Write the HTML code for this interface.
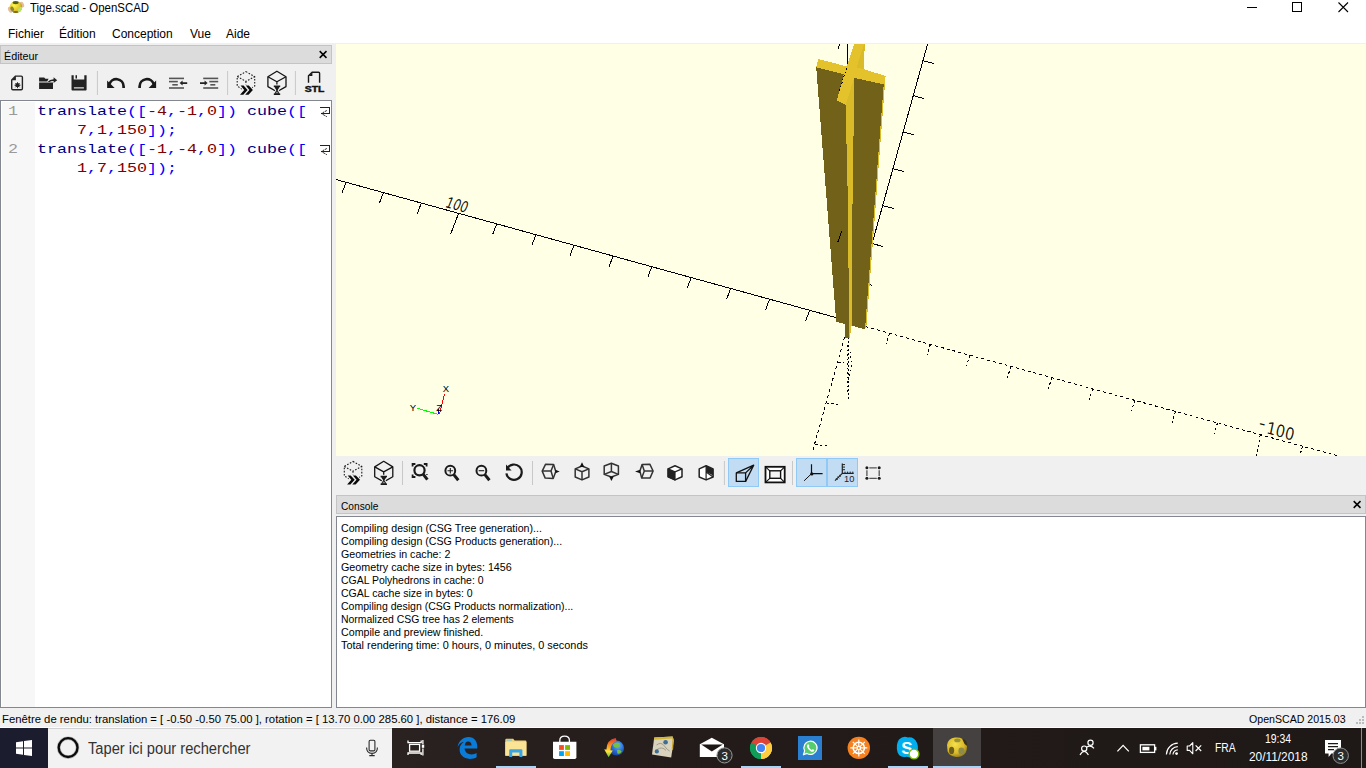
<!DOCTYPE html>
<html lang="fr">
<head>
<meta charset="utf-8">
<title>Tige.scad - OpenSCAD</title>
<style>
*{box-sizing:border-box;margin:0;padding:0}
html,body{width:1366px;height:768px;overflow:hidden;background:#f0f0f0}
body{position:relative;font-family:"Liberation Sans",sans-serif;font-size:12px;color:#000}
.abs{position:absolute}
.t{position:absolute;white-space:pre;line-height:1}
#titlebar{left:0;top:0;width:1366px;height:23px;background:#fff}
#menubar{left:0;top:23px;width:1366px;height:20px;background:#fff}
#docktitle1{left:0;top:45px;width:332px;height:19px;background:#dcdcdc;border:1px solid #c4c4c4}
#editor{left:0;top:100px;width:332px;height:608px;background:#fff;border:1px solid #828790}
#margin{left:2px;top:102px;width:33px;height:605px;background:#f7f7f7}
#viewport{left:336px;top:44px;width:1030px;height:412px;background:#ffffe5}
#vtoolbar{left:336px;top:456px;width:1030px;height:39px;background:#f0f0f0}
#docktitle2{left:336px;top:495px;width:1030px;height:19px;background:#dcdcdc;border:1px solid #c4c4c4}
#console{left:336px;top:516px;width:1030px;height:192px;background:#fff;border:1px solid #828790}
#statusbar{left:0;top:708px;width:1366px;height:20px;background:#f0f0f0}
#taskbar{left:0;top:728px;width:1366px;height:40px;background:#1c1718}
#search{left:48px;top:728px;width:344px;height:40px;background:#f2f2f2}
.code{font-family:"Liberation Mono",monospace;font-size:13px;transform:scaleX(1.2818);transform-origin:0 0}
.kw{color:#00007f}.op{color:#0000ff}.num{color:#7f0000}
.ln{color:#9a9a9a}
.con{font-size:11px}
</style>
</head>
<body>
<div id="titlebar" class="abs"></div>
<div id="menubar" class="abs"></div>
<div class="t" id="title" style="left:30px;top:2px;font-size:12px;transform-origin:0 0;transform:scaleX(0.9532)">Tige.scad - OpenSCAD</div>
<div class="t" style="left:8px;top:28px">Fichier</div>
<div class="t" style="left:59px;top:28px">Édition</div>
<div class="t" style="left:112px;top:28px">Conception</div>
<div class="t" style="left:190px;top:28px">Vue</div>
<div class="t" style="left:226px;top:28px">Aide</div>

<div id="docktitle1" class="abs"></div>
<div class="t con" id="dk1" style="left:4px;top:51px;transform-origin:0 0;transform:scaleX(0.9811)">Éditeur</div>
<div id="editor" class="abs"></div>
<div id="margin" class="abs"></div>


<div class="t code" style="left:36.6px;top:105px"><span class="kw">translate</span><span class="op">([-</span><span class="num">4</span><span class="op">,-</span><span class="num">1</span><span class="op">,</span><span class="num">0</span><span class="op">])</span> <span class="kw">cube</span><span class="op">([</span></div>
<div class="t code" style="left:76.6px;top:124px"><span class="num">7</span><span class="op">,</span><span class="num">1</span><span class="op">,</span><span class="num">150</span><span class="op">]);</span></div>
<div class="t code" style="left:36.6px;top:143px"><span class="kw">translate</span><span class="op">([-</span><span class="num">1</span><span class="op">,-</span><span class="num">4</span><span class="op">,</span><span class="num">0</span><span class="op">])</span> <span class="kw">cube</span><span class="op">([</span></div>
<div class="t code" style="left:76.6px;top:162px"><span class="num">1</span><span class="op">,</span><span class="num">7</span><span class="op">,</span><span class="num">150</span><span class="op">]);</span></div>
<div class="t code ln" style="left:8.4px;top:105px">1</div>
<div class="t code ln" style="left:8.4px;top:143px">2</div>

<!--ED_TOOLBAR-->
<svg class="abs" style="left:0;top:64px" width="332" height="36" viewBox="0 64 332 36">
<g fill="none" stroke="#222" stroke-width="1.4" stroke-linejoin="round"><path d="M15.6 76.1 H21.2 Q22.4 76.1 22.4 77.3 V88.5 Q22.4 89.7 21.2 89.7 H12.9 Q11.7 89.7 11.7 88.5 V80 Z"/></g>
<path d="M15.9 76.3 V80.3 H11.9 Z" fill="#222"/>
<circle cx="17.5" cy="85.2" r="2.1" fill="#222"/><g stroke="#222" stroke-width="0.9"><path d="M17.5 82.2 V88.2 M14.5 85.2 H20.5 M15.4 83.1 L19.6 87.3 M19.6 83.1 L15.4 87.3"/></g>
<path d="M39.1 77.4 H44.2 L45.4 78.8 H48.6 L47.2 81.6 H39.1 Z" fill="#222"/>
<rect x="39.1" y="82.5" width="13.9" height="6.5" fill="#222"/>
<path d="M47.6 81.9 Q49.5 79.3 53.6 79.2 V77.3 L57.2 80.2 L53.6 83 V81.1 Q51 81 49.6 81.9 Z" fill="#222"/>
<path d="M71.5 75.2 H73.7 V79.5 H84.3 V75.2 H86.6 V89.4 Q86.6 90.4 85.6 90.4 H72.5 Q71.5 90.4 71.5 89.4 Z" fill="#222"/>
<rect x="75.5" y="75.2" width="1.5" height="3.3" fill="#222"/>
<rect x="73.9" y="87.1" width="10" height="1.5" fill="#bdbdbd"/>
<rect x="96.9" y="71" width="1" height="24.0" fill="#c8c8c8"/>
<path d="M123.6 88.1 V86.4 A7.3 7.3 0 0 0 109.3 84.4" fill="none" stroke="#1a1a1a" stroke-width="2.7"/><path d="M107.1 80.6 V88.1 H114.6 Z" fill="#1a1a1a"/>
<g transform="translate(263.2 0) scale(-1 1)"><path d="M123.6 88.1 V86.4 A7.3 7.3 0 0 0 109.3 84.4" fill="none" stroke="#1a1a1a" stroke-width="2.7"/><path d="M107.1 80.6 V88.1 H114.6 Z" fill="#1a1a1a"/></g>
<g fill="#555"><rect x="169" y="77.6" width="15" height="1.6"/><rect x="169" y="80.8" width="8.8" height="1.6"/><rect x="172.3" y="84" width="5.5" height="1.6"/><rect x="169" y="87.2" width="15" height="1.6"/></g>
<path d="M187.2 82.3 H182.6 V80.6 L179.6 83.1 L182.6 85.6 V83.9 H187.2 Z" fill="#222"/>
<g fill="#555"><rect x="203.2" y="77.6" width="15" height="1.6"/><rect x="209.3" y="80.8" width="8.9" height="1.6"/><rect x="210.3" y="84" width="5" height="1.6"/><rect x="203.2" y="87.2" width="15" height="1.6"/></g>
<path d="M200 82.3 H204.6 V80.6 L207.6 83.1 L204.6 85.6 V83.9 H200 Z" fill="#222"/>
<rect x="227.1" y="71" width="1" height="24.0" fill="#c8c8c8"/>
<g fill="none" stroke="#1a1a1a" stroke-width="1.1" stroke-dasharray="1.6 1.5"><path d="M245.9,71.6 L254.7,76.6 L254.7,86.1 L245.9,91.2 L237.2,86.1 L237.2,76.6 Z"/><path d="M237.2,76.6 L245.9,81.4 L254.7,76.6 M245.9,81.4 L245.9,91.0"/></g><path d="M240.6,85.6 L243.6,85.6 L247.6,90.0 L243.3,94.7 L240.0,94.7 L244.2,90.0 Z M245.8,85.6 L248.8,85.6 L252.9,90.0 L248.5,94.7 L245.2,94.7 L249.4,90.0 Z" fill="#f0f0f0" stroke="#f0f0f0" stroke-width="2.2" stroke-linejoin="round"/><path d="M240.6,85.6 L243.6,85.6 L247.6,90.0 L243.3,94.7 L240.0,94.7 L244.2,90.0 Z M245.8,85.6 L248.8,85.6 L252.9,90.0 L248.5,94.7 L245.2,94.7 L249.4,90.0 Z" fill="#0a0a0a"/>
<g fill="none" stroke="#141414" stroke-width="1.3" stroke-linejoin="round"><path d="M276.9,71.2 L286.0,76.8 L286.0,86.6 L276.9,91.8 L267.9,86.6 L267.9,76.8 Z"/><path d="M267.9,76.8 L276.9,81.8 L286.0,76.8 M276.9,81.8 L276.9,86.0"/></g><path d="M273.8,85.6 H280.2 V87.1 H279.6 L277.6,90.2 L279.6,93.4 H280.2 V94.9 H273.8 V93.4 H274.4 L276.4,90.2 L274.4,87.1 H273.8 Z" fill="#f0f0f0" stroke="#f0f0f0" stroke-width="2"/><path d="M273.8,85.6 H280.2 V87.1 H279.6 L277.6,90.2 L279.6,93.4 H280.2 V94.9 H273.8 V93.4 H274.4 L276.4,90.2 L274.4,87.1 H273.8 Z" fill="#1a1a1a"/><path d="M275.6,88.2 H278.4 L277.0,90.0 Z" fill="#1a1a1a"/><path d="M275.3,93.2 L277.0,91.2 L278.7,93.2 Z" fill="#8a8a8a"/>
<rect x="294.9" y="71" width="1" height="24.0" fill="#c8c8c8"/>
<path d="M308.5 82.8 V75.8 L312.2 72.2 H318.6 Q319.6 72.2 319.6 73.2 V82.8" fill="none" stroke="#1a1a1a" stroke-width="1.4"/><path d="M312.4 72.4 V76 H308.7 Z" fill="#1a1a1a"/>
<text x="314.6" y="92.2" text-anchor="middle" font-family="Liberation Sans, sans-serif" font-weight="bold" font-size="9.4px" fill="#111" stroke="#111" stroke-width="0.45" textLength="19.6" lengthAdjust="spacingAndGlyphs">STL</text>
</svg>
<!--/ED_TOOLBAR-->
<div id="viewport" class="abs"></div>
<!--SCENE-->
<svg class="abs" style="left:336px;top:44px" width="1030" height="412" viewBox="336 44 1030 412" shape-rendering="crispEdges">
<g stroke="#000" stroke-width="1" fill="none">
<path d="M336 179.5 L848.5 321.0"/>
<path d="M346.1 182.3 l-4 10.5 M383.4 192.6 l-4 10.5 M421.3 203.1 l-4 10.5 M496.7 223.9 l-4 10.5 M535.9 234.7 l-4 10.5 M574.0 245.2 l-4 10.5 M613.1 256.0 l-4 10.5 M651.8 266.7 l-4 10.5 M691.2 277.6 l-4 10.5 M730.7 288.5 l-4 10.5 M769.6 299.2 l-4 10.5 M809.7 310.3 l-4 10.5 M458.6 213.4 l-8 20.8 "/>
<path d="M927.6 44 L856.4 300"/>
<path d="M923.6 61.1 L933.75 63.4 M913.4 95.5 L923.6 98.6 M903.3 132.2 L913.9 134.6 M893.1 168.75 L903.75 171.4 M882.5 205.5 L893.9 208.6 M872 243.4 L883 246.6 M861.5 282 L872 285.3 "/>
<path d="M847.5 44 V67 M839.7 44 L838.2 48.7"/>
</g>
<g stroke="#000" stroke-width="1" fill="none" stroke-dasharray="3 3">
<path d="M865.6 326.7 L1366 463.6"/>
<path d="M889.6 333.3 l-3.6 11 M930.4 344.4 l-3.6 11 M970.0 355.3 l-3.6 11 M1011.0 366.5 l-3.6 11 M1051.9 377.7 l-3.6 11 M1092.6 388.8 l-3.6 11 M1134.9 400.4 l-3.6 11 M1175.6 411.5 l-3.6 11 M1217.5 423.0 l-3.6 11 M1302.7 446.3 l-3.6 11 M1345.0 457.9 l-3.6 11 M1260.2 434.7 l-3.8 22 " stroke-dasharray="2.5 2.5"/>
<path d="M844.6 337.3 L812 453.2"/>
<path d="M838.3 362.3 L843.7 362.8 M826.4 402.9 L837.7 404.2 M814.6 444.2 L827 446" stroke-dasharray="3 2"/>
<path d="M848.6 337.3 V399" stroke-dasharray="2 2"/>
<path d="M847 345 V395 M850 352 L851.5 366 L848 380" stroke-dasharray="1.5 3"/>
</g>
<g>
<path d="M816.2 67.3 L843.7 74.2 L848 104 L850.5 318 L848.9 324 L845.25 324 L836.2 321.7 Z" fill="#726118"/>
<path d="M836.8 100.6 L845.7 104.9 L850 200 L850 318 L848.9 337.6 L845.3 337.6 L844.8 322 Z" fill="#726118"/>
<path d="M852.5 75.8 L884.3 82.5 L884.3 84.6 L865 329.3 L852.3 325.8 L851.6 318 Z" fill="#726118"/>
<path d="M883.7 84.4 L884 78 L885.6 76 L866.4 326.6 L865 329.3 Z" fill="#d9ba28"/>
<path d="M854.2 77.8 L845.7 104.9 L846.2 130 L847.9 202 L848.9 310 L848.9 337.6 L849.7 337.6 L852.4 321 L852.5 205 L853.6 130 Z" fill="#d9ba28"/>
<path d="M856.5 67.3 L864 44 L864.8 44 L863.8 69.2 Z" fill="#d9ba28"/>
<path d="M818.2 59.1 L846.9 66.4 L854.2 44 L864.1 44 L856.6 67.4 L863.75 69.2 L885.6 76 L884.9 84.6 L854.2 77.8 L845.7 104.9 L836.8 100.65 L843.7 74.2 L816.2 67.3 Z" fill="#e3c22b"/>
</g>
<g stroke="#000" stroke-width="1" fill="none"><path d="M846.4 68.2 L839.2 92" stroke-dasharray="1.5 2.2"/><path d="M841.6 231 L837.7 242.5"/></g>
<g shape-rendering="auto" font-family="Liberation Sans, sans-serif" fill="#000">
<text transform="matrix(0.961 0.276 -0.38 0.925 444.6 206.4)" font-family="DejaVu Sans, Liberation Sans, sans-serif" font-weight="200" stroke="#000" stroke-width="0.45" font-size="14.5px" textLength="22" lengthAdjust="spacingAndGlyphs">100</text>
<text transform="matrix(0.963 0.27 -0.208 0.975 1258 430.6)" font-family="DejaVu Sans, Liberation Sans, sans-serif" font-weight="200" stroke="#000" stroke-width="0.45" font-size="16px"><tspan dy="-3">-</tspan><tspan dy="3" dx="2.2" textLength="28.5" lengthAdjust="spacingAndGlyphs">100</tspan></text>
</g>
<g stroke-width="1" fill="none"><path d="M444.6 394.2 L439.3 414.4" stroke="#f00"/><path d="M417.1 408.3 L438.3 414.4" stroke="#0f0"/><path d="M438.5 409.2 V414.4" stroke="#00f"/></g>
<g shape-rendering="auto" font-family="Liberation Sans, sans-serif" font-size="9.5px" fill="#000" text-anchor="middle"><text x="446" y="392.3">X</text><text x="413" y="411.3">Y</text><text x="439.2" y="411.2">Z</text></g>
</svg>
<!--/SCENE-->
<div id="vtoolbar" class="abs"></div>
<!--VT_TOOLBAR-->
<svg class="abs" style="left:336px;top:456px" width="1030" height="39" viewBox="336 456 1030 39">
<rect x="728.5" y="458.5" width="30" height="28" fill="#c2dcf3" stroke="#90c8f6" stroke-width="1"/>
<rect x="796.5" y="458.5" width="30" height="28" fill="#c2dcf3" stroke="#90c8f6" stroke-width="1"/>
<rect x="827.5" y="458.5" width="30" height="28" fill="#c2dcf3" stroke="#90c8f6" stroke-width="1"/>
<g fill="none" stroke="#1a1a1a" stroke-width="1.1" stroke-dasharray="1.6 1.5"><path d="M353.0,461.4 L361.8,466.4 L361.8,475.9 L353.0,481.0 L344.3,475.9 L344.3,466.4 Z"/><path d="M344.3,466.4 L353.0,471.2 L361.8,466.4 M353.0,471.2 L353.0,480.8"/></g><path d="M347.7,475.4 L350.7,475.4 L354.7,479.8 L350.4,484.5 L347.1,484.5 L351.3,479.8 Z M352.9,475.4 L355.9,475.4 L360.0,479.8 L355.6,484.5 L352.3,484.5 L356.5,479.8 Z" fill="#f0f0f0" stroke="#f0f0f0" stroke-width="2.2" stroke-linejoin="round"/><path d="M347.7,475.4 L350.7,475.4 L354.7,479.8 L350.4,484.5 L347.1,484.5 L351.3,479.8 Z M352.9,475.4 L355.9,475.4 L360.0,479.8 L355.6,484.5 L352.3,484.5 L356.5,479.8 Z" fill="#0a0a0a"/>
<g fill="none" stroke="#141414" stroke-width="1.3" stroke-linejoin="round"><path d="M383.7,461.3 L392.8,466.9 L392.8,476.7 L383.7,481.9 L374.7,476.7 L374.7,466.9 Z"/><path d="M374.7,466.9 L383.7,471.9 L392.8,466.9 M383.7,471.9 L383.7,476.1"/></g><path d="M380.6,475.7 H387.0 V477.2 H386.4 L384.4,480.3 L386.4,483.5 H387.0 V485.0 H380.6 V483.5 H381.2 L383.2,480.3 L381.2,477.2 H380.6 Z" fill="#f0f0f0" stroke="#f0f0f0" stroke-width="2"/><path d="M380.6,475.7 H387.0 V477.2 H386.4 L384.4,480.3 L386.4,483.5 H387.0 V485.0 H380.6 V483.5 H381.2 L383.2,480.3 L381.2,477.2 H380.6 Z" fill="#1a1a1a"/><path d="M382.4,478.3 H385.2 L383.8,480.1 Z" fill="#1a1a1a"/><path d="M382.1,483.3 L383.8,481.3 L385.5,483.3 Z" fill="#8a8a8a"/>
<rect x="402.0" y="461" width="1" height="24.0" fill="#c8c8c8"/>
<g fill="none" stroke="#1a1a1a"><circle cx="419.5" cy="470.3" r="5.1" stroke-width="2.2"/><path d="M423.3 474.4 L427.4 479.6" stroke-width="3"/><path d="M412.6 466.6 V464 H415.4 M423.8 464 H426.6 V466.6 M412.6 474.4 V477 H415.4 M426.9 474.2 V475" stroke-width="1.8"/></g>
<g fill="none" stroke="#1a1a1a"><circle cx="450.3" cy="470.7" r="4.9" stroke-width="2"/><path d="M453.8 474.6 L458.3 480.2" stroke-width="3"/><path d="M447.5 470.7 H453.1 M450.3 467.9 V473.5" stroke-width="1.1"/></g>
<g fill="none" stroke="#1a1a1a"><circle cx="481.4" cy="470.7" r="4.9" stroke-width="2"/><path d="M484.9 474.6 L489.4 480.2" stroke-width="3"/><path d="M478.59999999999997 470.7 H484.2" stroke-width="1.1"/></g>
<path d="M507.2 468.6 A7.7 7.7 0 1 1 506.4 473.4" fill="none" stroke="#1a1a1a" stroke-width="2.2"/><path d="M506 464.6 V470.4 H511.6 Z" fill="#1a1a1a"/>
<rect x="532.0" y="461" width="1" height="24.0" fill="#c8c8c8"/>
<g fill="none" stroke="#333" stroke-width="1.5" stroke-linejoin="round"><path d="M542.2 471.1 L545.5 464.3 L553.6 464.5 L555.8 471.4 L553.2 478.4 L545.2 478.1 Z"/><path d="M542.2 471.1 L551 471 M553.6 464.5 L551 471 L553.2 478.4"/></g><path d="M555.4 469.7 V473.3 L559.7 471.5 Z" fill="#111"/>
<g fill="none" stroke="#333" stroke-width="1.5" stroke-linejoin="round"><path d="M582 466 L588.9 468.9 V477 L582 479.9 L575.2 477 V468.9 Z"/><path d="M575.2 468.9 L582 471.7 L588.9 468.9 M582 471.7 V479.9"/></g><path d="M582 462.2 L579.7 466.9 H584.3 Z" fill="#111"/>
<g fill="none" stroke="#333" stroke-width="1.5" stroke-linejoin="round"><path d="M611.4 463.3 L618.4 466 V474.4 L611.4 477 L604.2 474.4 V466 Z"/><path d="M611.4 463.3 V471.5 L604.2 474.4 M611.4 471.5 L618.4 474.4"/></g><path d="M611.4 481.1 L609.2 476.5 H613.7 Z" fill="#111"/>
<g fill="none" stroke="#333" stroke-width="1.5" stroke-linejoin="round"><path d="M639.9 471.1 L642.1 464.4 L649.8 464.2 L653.1 471 L650.1 477.9 L641.7 478.1 Z"/><path d="M653.1 471 L644.3 471.1 M642.1 464.4 L644.3 471.1 L641.7 478.1"/></g><path d="M640.2 469.7 V473.3 L635 471.5 Z" fill="#111"/>
<path d="M675 465.8 L682 468.9 V476.7 L675 479.9 L668.1 476.7 V468.9 Z" fill="#fff" stroke="#222" stroke-width="1.5" stroke-linejoin="round"/><path d="M668.1 468.9 L675 471.9 V479.9 L668.1 476.7 Z" fill="#222" stroke="#222" stroke-width="1.2" stroke-linejoin="round"/><path d="M675 471.9 L682 468.9" stroke="#222" stroke-width="1.2"/>
<path d="M706.1 465.8 L713.1 468.9 V477 L706.1 479.9 L699.2 477 V468.9 Z" fill="#fff" stroke="#222" stroke-width="1.5" stroke-linejoin="round"/><path d="M706.1 465.8 L713.1 468.9 V475.4 L706.1 472 Z" fill="#222"/><path d="M706.1 465.8 V479.9 M706.1 472 L713.1 477" stroke="#222" stroke-width="1.2"/><path d="M699.2 468.9 L703 467.2 V470.6 Z" fill="#222" opacity="0"/>
<rect x="723.9" y="461" width="1" height="24.0" fill="#c8c8c8"/>
<g fill="none" stroke="#111" stroke-width="1.3" stroke-linejoin="round"><rect x="736.3" y="472.9" width="9.3" height="8.5"/><path d="M736.3 472.9 L753.7 465.2 L745.6 472.9 M753.7 465.2 L745.6 481.4"/></g>
<rect x="765.5" y="466.8" width="19.2" height="15.6" fill="#fff" stroke="#111" stroke-width="1.8"/><rect x="769.8" y="470.8" width="10.8" height="7.5" fill="#f4f4f4" stroke="#111" stroke-width="1.4"/><path d="M765.5 466.8 L769.8 470.8 M784.7 466.8 L780.6 470.8 M765.5 482.4 L769.8 478.3 M784.7 482.4 L780.6 478.3" stroke="#111" stroke-width="1.1"/>
<rect x="792.0" y="461" width="1" height="24.0" fill="#c8c8c8"/>
<g stroke="#111" stroke-width="1.2" fill="none"><path d="M811.5 464.2 V473.7 H822.6"/><path d="M811.5 473.7 L804.1 480.8" stroke-width="1"/></g><circle cx="811.8" cy="473.9" r="1.6" fill="#111"/>
<g stroke="#222" stroke-width="1.2" fill="none"><path d="M842.3 463.4 V473.3 H853.7 M842.3 473.3 L835 480.6"/><path d="M842.3 464.6 H845 M842.3 467.1 H845 M842.3 469.7 H845 M845 473.3 V471.6 M847.6 473.3 V471.6 M850.2 473.3 V471.6 M852.8 473.3 V471.6" stroke-width="1"/><path d="M839.2 475 L840.9 476.7 M837.6 476.6 L839.3 478.3 M836 478.2 L837.7 479.9" stroke-width="0.9"/></g>
<text x="844" y="482.2" font-family="Liberation Sans, sans-serif" font-size="9.3px" fill="#222">10</text>
<g stroke="#555" stroke-width="1.3"><path d="M869.3 467.8 H876.8 M869.3 478.3 H876.8 M866.9 470.2 V475.9 M879.2 470.2 V475.9"/></g><g fill="#1a1a1a"><circle cx="866.9" cy="467.8" r="1.5"/><circle cx="879.2" cy="467.8" r="1.5"/><circle cx="866.9" cy="478.3" r="1.5"/><circle cx="879.2" cy="478.3" r="1.5"/></g>
</svg>
<!--/VT_TOOLBAR-->
<div id="docktitle2" class="abs"></div>
<div class="t con" id="dk2" style="left:341px;top:501px;transform-origin:0 0;transform:scaleX(0.9242)">Console</div>
<div id="console" class="abs"></div>
<div id="statusbar" class="abs"></div>
<div class="abs" style="left:0;top:727px;width:1366px;height:1px;background:#fcfcfc"></div>
<div class="t con" id="c0" style="left:341px;top:523px;transform-origin:0 0;transform:scaleX(0.9664)">Compiling design (CSG Tree generation)...</div>
<div class="t con" id="c1" style="left:341px;top:536px;transform-origin:0 0;transform:scaleX(0.9643)">Compiling design (CSG Products generation)...</div>
<div class="t con" id="c2" style="left:341px;top:549px;transform-origin:0 0;transform:scaleX(0.9662)">Geometries in cache: 2</div>
<div class="t con" id="c3" style="left:341px;top:562px;transform-origin:0 0;transform:scaleX(0.9767)">Geometry cache size in bytes: 1456</div>
<div class="t con" id="c4" style="left:341px;top:575px;transform-origin:0 0;transform:scaleX(0.9499)">CGAL Polyhedrons in cache: 0</div>
<div class="t con" id="c5" style="left:341px;top:588px;transform-origin:0 0;transform:scaleX(0.9559)">CGAL cache size in bytes: 0</div>
<div class="t con" id="c6" style="left:341px;top:601px;transform-origin:0 0;transform:scaleX(0.9571)">Compiling design (CSG Products normalization)...</div>
<div class="t con" id="c7" style="left:341px;top:614px;transform-origin:0 0;transform:scaleX(0.9485)">Normalized CSG tree has 2 elements</div>
<div class="t con" id="c8" style="left:341px;top:627px;transform-origin:0 0;transform:scaleX(0.9690)">Compile and preview finished.</div>
<div class="t con" id="c9" style="left:341px;top:640px;transform-origin:0 0;transform:scaleX(0.9897)">Total rendering time: 0 hours, 0 minutes, 0 seconds</div>
<div class="t con" id="st1" style="left:2px;top:714px;transform-origin:0 0;transform:scaleX(1.0280)">Fenêtre de rendu: translation = [ -0.50 -0.50 75.00 ], rotation = [ 13.70 0.00 285.60 ], distance = 176.09</div>
<div class="t con" id="st2" style="left:1249.4px;top:714px;transform-origin:0 0;transform:scaleX(0.9631)">OpenSCAD 2015.03</div>

<!--MISC-->
<svg class="abs" style="left:0;top:0" width="1366" height="23" viewBox="0 0 1366 23">
<defs><radialGradient id="ti" cx="0.35" cy="0.35" r="0.8"><stop offset="0" stop-color="#fff84a"/><stop offset="0.55" stop-color="#e6c62e"/><stop offset="1" stop-color="#8a7a1a"/></radialGradient></defs>
<ellipse cx="10.4" cy="9.6" rx="2.2" ry="3.2" fill="#d8a878" opacity="0.75" transform="rotate(-25 10.4 9.6)"/><ellipse cx="22" cy="4.6" rx="1.9" ry="3" fill="#d8a878" opacity="0.75" transform="rotate(-25 22 4.6)"/>
<ellipse cx="16" cy="7" rx="6.2" ry="5.9" fill="url(#ti)"/>
<ellipse cx="15.6" cy="2.6" rx="3" ry="1.7" fill="#4f5f1c"/><ellipse cx="19.8" cy="9.4" rx="1.7" ry="3" fill="#b9e264" transform="rotate(35 19.8 9.4)"/><ellipse cx="12.2" cy="8.8" rx="1.7" ry="2.4" fill="#8d8434" transform="rotate(-30 12.2 8.8)"/><ellipse cx="15.6" cy="12" rx="2.6" ry="1" fill="#7a6d14"/>
<g stroke="#000" stroke-width="1" fill="none" shape-rendering="crispEdges"><path d="M1247 7.5 H1257"/><rect x="1292.5" y="2.5" width="9" height="9"/></g><path d="M1338.5 2.5 L1348 12 M1348 2.5 L1338.5 12" stroke="#000" stroke-width="1.1" fill="none"/>
</svg>
<svg class="abs" style="left:0;top:44px" width="1366" height="684" viewBox="0 44 1366 684">
<path d="M319.70000000000005 51.1 L326.5 57.9 M326.5 51.1 L319.70000000000005 57.9" stroke="#000" stroke-width="1.5" fill="none"/>
<path d="M1353.6999999999998 501.1 L1360.5 507.9 M1360.5 501.1 L1353.6999999999998 507.9" stroke="#000" stroke-width="1.5" fill="none"/>
<g stroke="#222" stroke-width="1" fill="none"><path d="M320 107.5 H329.5 V113.5 H321.3" shape-rendering="crispEdges"/><path d="M326.8 110.5 L321.3 113.5 L326.8 116.7" stroke-dasharray="2 0.8"/></g>
<g stroke="#222" stroke-width="1" fill="none"><path d="M320 145.5 H329.5 V151.5 H321.3" shape-rendering="crispEdges"/><path d="M326.8 148.5 L321.3 151.5 L326.8 154.7" stroke-dasharray="2 0.8"/></g>
<rect x="1362" y="716" width="2" height="2" fill="#bcbcbc"/><rect x="1359" y="719" width="2" height="2" fill="#bcbcbc"/><rect x="1362" y="719" width="2" height="2" fill="#bcbcbc"/><rect x="1356" y="722" width="2" height="2" fill="#bcbcbc"/><rect x="1359" y="722" width="2" height="2" fill="#bcbcbc"/><rect x="1362" y="722" width="2" height="2" fill="#bcbcbc"/>
</svg>
<!--/MISC-->
<!--TASKBAR-->
<svg class="abs" style="left:0;top:728px" width="1366" height="40" viewBox="0 728 1366 40">
<defs><linearGradient id="tbg" x1="0" x2="1" y1="0" y2="0"><stop offset="0" stop-color="#2a2220"/><stop offset="0.35" stop-color="#221b19"/><stop offset="1" stop-color="#1e1817"/></linearGradient></defs>
<rect x="392" y="728" width="974" height="40" fill="url(#tbg)"/>
<rect x="0" y="728" width="48" height="40" fill="#1c1c2f"/>
<rect x="48" y="728" width="344" height="40" fill="#f2f2f2"/><rect x="48" y="728" width="344" height="1" fill="#d2d2d2"/>
<path d="M16 742.2 L23 741.2 V747.4 H16 Z M24 741.1 L32 740 V747.4 H24 Z M16 748.4 H23 V754.7 L16 753.7 Z M24 748.4 H32 V756 L24 754.9 Z" fill="#fff"/>
<circle cx="68.1" cy="747.6" r="9.4" fill="none" stroke="#000" stroke-opacity="0.25" stroke-width="3.6"/><circle cx="68.1" cy="747.6" r="9.4" fill="none" stroke="#0a0a0a" stroke-width="2.3"/>
<g fill="none" stroke="#2a2a2a" stroke-width="1.1"><rect x="369.1" y="740.3" width="5.8" height="10.6" rx="1.2"/><path d="M366.6 747.5 Q366.6 753.4 372 753.4 Q377.4 753.4 377.4 747.5 M372 753.4 V755.5 M369.3 755.6 H374.7"/></g>
<g fill="none" stroke="#fff" stroke-width="1.3"><rect x="409.6" y="744.4" width="10" height="6.8"/><path d="M408 740.6 V742.6 H421.2 V740.6 M408 755 V753 H421.2 V755 M422.9 740 V744 M422.9 748.5 V755.5"/></g><rect x="421.8" y="744.6" width="2.4" height="3.2" fill="#fff"/>
<path d="M457.6 747.2 C458.6 740.8 463.4 737.1 468.4 737.1 C474.6 737.1 477.2 741.8 477.2 746.4 V748.6 H464.6 C464.8 752.6 468 754.4 471.4 754.4 C473.6 754.4 475.4 753.8 476.6 753 V757.2 C475 758.2 472.6 758.9 469.8 758.9 C463.4 758.9 459.6 754.8 459.6 749.6 C459.6 746.2 461.4 743.4 464 741.8 C460.6 742.6 458.6 744.8 457.6 747.2 Z M464.8 745.4 H471.6 C471.6 743 470.2 741.6 468.2 741.6 C466.2 741.6 465 743.2 464.8 745.4 Z" fill="#0a7bd7"/>
<rect x="496" y="766" width="40" height="2" fill="#a5d4f7"/>
<path d="M505.3 740 Q505.3 738.8 506.5 738.8 H513.2 L514.6 740.4 H525.2 Q526.4 740.4 526.4 741.6 V755.6 H505.3 Z" fill="#f5d273"/><path d="M505.3 741.8 H526.4 V755.8 H505.3 Z" fill="#fbe395"/><rect x="506.5" y="739.6" width="5.6" height="1" fill="#6fc3ee"/>
<path d="M509.2 757 V750.2 Q509.2 749.2 510.2 749.2 H521.4 Q522.4 749.2 522.4 750.2 V757 H519.4 V752.4 H512.2 V757 Z" fill="#38a5e6"/>
<path d="M559.8 742 V740.6 Q559.8 736.2 564.6 736.2 Q569.4 736.2 569.4 740.6 V742" fill="none" stroke="#fff" stroke-width="1.3"/><path d="M553 741.8 H576.4 V757.2 Q576.4 758.9 574.7 758.9 H554.7 Q553 758.9 553 757.2 Z" fill="#fff"/>
<rect x="559.1" y="745.1" width="4.8" height="4.8" fill="#f25022"/><rect x="565.1" y="745.1" width="4.9" height="4.8" fill="#7fba00"/><rect x="559.1" y="751.2" width="4.8" height="4.8" fill="#00a4ef"/><rect x="565.1" y="751.2" width="4.9" height="4.8" fill="#ffb900"/>
<defs><radialGradient id="gl" cx="0.6" cy="0.35" r="0.7"><stop offset="0" stop-color="#6fb6ff"/><stop offset="0.5" stop-color="#2a6fd6"/><stop offset="1" stop-color="#153f96"/></radialGradient><linearGradient id="rb" x1="0" x2="0" y1="0" y2="1"><stop offset="0" stop-color="#e6332a"/><stop offset="0.4" stop-color="#f7941d"/><stop offset="0.7" stop-color="#ffe23a"/><stop offset="1" stop-color="#5cc13b"/></linearGradient></defs>
<circle cx="616.4" cy="748" r="7.6" fill="url(#gl)"/><path d="M613 744.2 Q616 741.6 619.4 743 Q620.6 745.4 618.4 747 Q615.4 748.2 613.6 746.6 Z M617 750 Q620.4 749 621.6 751.6 Q620 754.6 617.4 753.6 Z" fill="#74c043"/>
<path d="M615.8 738 Q606.6 739.6 606.4 749.6 L604.2 749.2 L608.6 757.2 L612.8 750.6 L610.4 750.2 Q610.4 743.6 616.6 741.2 Z" fill="url(#rb)"/>
<path d="M654.2 737.6 L672.6 736.6 L673.8 740.2 L671.2 757.6 L652 754.4 Z" fill="#d9d2bd"/><path d="M654.2 737.6 L672.6 736.6 L673.2 738.6 L654 739.8 Z" fill="#d4b635"/><path d="M672.6 736.6 L673.9 740.2 L673 750 L671.8 749.6 Z" fill="#c9a92d"/>
<path d="M656.6 745 Q661 741.4 664.4 746 T669.6 751 M657 749.6 Q662 746 666 750.4" fill="none" stroke="#a09a8a" stroke-width="1"/><circle cx="665.6" cy="742.2" r="2.3" fill="#3c6e96"/><circle cx="656.8" cy="751.4" r="2.1" fill="#3c6e96"/>
<path d="M699.8 744.2 L711.8 737.8 L724 744.2 V757 H699.8 Z" fill="#fff"/><path d="M701.2 744.6 H722.8 L711.8 751.4 Z" fill="#1d1716"/>
<circle cx="724.5" cy="755.4" r="7.6" fill="#2b2b2b" stroke="#9a9a9a" stroke-width="1"/>
<text x="724.6" y="759.6" text-anchor="middle" font-family="Liberation Sans, sans-serif" font-size="11.5px" fill="#fff">3</text>
<rect x="741" y="766" width="40" height="2" fill="#a5d4f7"/>
<circle cx="761" cy="748" r="11" fill="#0f9d58"/><path d="M761 748 L751.5 742.5 A11 11 0 0 1 770.5 742.5 Z" fill="#db4437"/><path d="M761 748 L770.5 742.5 A11 11 0 0 1 761 759 Z" fill="#ffcd40"/>
<path d="M761 737 A11 11 0 0 1 770.53 742.5 L761 742.5 Z" fill="#db4437"/><path d="M770.53 742.5 A11 11 0 0 1 761 759 L765.8 750.8 Z" fill="#ffcd40"/><path d="M761 759 A11 11 0 0 1 751.47 742.5 L756.2 750.8 Z" fill="#0f9d58"/>
<circle cx="761" cy="748" r="5.2" fill="#fff"/><circle cx="761" cy="748" r="4.1" fill="#4285f4"/>
<rect x="798" y="736" width="24" height="24" fill="#2b7fd1"/><path d="M803.4 754.8 L804.6 750.8 A6.6 6.6 0 1 1 807 753.4 Z" fill="#55cd6c" stroke="#fff" stroke-width="1.2" stroke-linejoin="round"/><path d="M807.6 744.6 Q808.4 743.8 809 745 L809.4 746 Q809.2 746.6 808.8 747 Q809.8 749 811.8 750 Q812.4 749.2 812.8 749.2 L814 749.8 Q814.6 750.2 813.8 751.2 Q812.6 752.2 810.6 751.2 Q807.8 749.8 807 746.8 Q806.8 745.4 807.6 744.6 Z" fill="#fff"/>
<circle cx="858.8" cy="747.9" r="11.2" fill="#f5821f"/><g fill="none" stroke="#fff"><circle cx="858.8" cy="747.9" r="5.6" stroke-width="1.6"/><path d="M858.8 739.4 V756.4 M850.3 747.9 H867.3 M852.8 741.9 L864.8 753.9 M864.8 741.9 L852.8 753.9" stroke-width="1.2"/></g><circle cx="858.8" cy="747.9" r="2.2" fill="#fff"/><circle cx="858.8" cy="747.9" r="1" fill="#f5821f"/>
<rect x="888" y="766" width="40" height="2" fill="#a5d4f7"/>
<path d="M899 739.4 Q903 735.6 908 737.4 Q914.6 736.8 917 743 Q919.6 749.6 915.4 754 Q912 758.4 906.6 756.8 Q900 758 897.6 752.4 Q895.4 744.6 899 739.4 Z" fill="#00aff0"/>
<text x="906.8" y="753.6" text-anchor="middle" font-family="Liberation Sans, sans-serif" font-weight="bold" font-size="17px" fill="#fff">S</text>
<circle cx="914" cy="754" r="4.9" fill="#fff" stroke="#7fba00" stroke-width="1.4"/>
<rect x="933" y="728" width="48" height="38" fill="#454140"/><rect x="933" y="766" width="48" height="2" fill="#a5d4f7"/>
<defs><radialGradient id="os" cx="0.4" cy="0.35" r="0.75"><stop offset="0" stop-color="#f5e04a"/><stop offset="0.6" stop-color="#d9b92a"/><stop offset="1" stop-color="#7d6a1a"/></radialGradient></defs>
<path d="M947 745 Q948 738.6 955 737.6 Q962.6 736.8 965.8 742 Q968.4 747 965.6 753 Q962 757.6 956 757 Q949.6 756.4 947.6 751.6 Z" fill="url(#os)"/><ellipse cx="951.6" cy="750.4" rx="2.6" ry="3.6" fill="#6b5d1e"/><ellipse cx="961.4" cy="751" rx="3" ry="3.4" fill="#8d8a4a"/><ellipse cx="957.4" cy="740.4" rx="3.2" ry="1.8" fill="#9a8f3a"/><path d="M962 738.6 Q967.6 740 967.2 746 L964.6 744 Z" fill="#3a2f1a"/>
<g fill="none" stroke="#fff" stroke-width="1.2"><circle cx="1090.5" cy="742.8" r="2.6"/><circle cx="1084.2" cy="748.6" r="2.6"/><path d="M1086.6 747.2 Q1090.6 744.6 1094 748.4 M1080 755 Q1084.2 747.6 1088.4 755"/></g>
<path d="M1117.4 751.4 L1123.1 745.4 L1128.8 751.4" fill="none" stroke="#fff" stroke-width="1.3"/>
<rect x="1140.4" y="744.8" width="14.2" height="7.6" fill="none" stroke="#fff" stroke-width="1.3"/><rect x="1155" y="746.8" width="1.4" height="3.6" fill="#fff"/><rect x="1142.4" y="746.8" width="7" height="3.6" fill="#fff"/>
<g fill="none" stroke="#fff" stroke-width="1.2"><path d="M1166.4 754.6 A11.6 11.6 0 0 1 1177.8 743.2"/><path d="M1169.8 754.6 A8.2 8.2 0 0 1 1177.8 746.6"/><path d="M1173 754.6 A5 5 0 0 1 1177.8 749.8"/></g><circle cx="1176.6" cy="753.6" r="1.4" fill="#fff"/>
<path d="M1187.2 746 H1189.6 L1192.8 742.6 V753.8 L1189.6 750.4 H1187.2 Z" fill="none" stroke="#fff" stroke-width="1.1" stroke-linejoin="round"/><path d="M1195.6 745.4 L1201.2 751 M1201.2 745.4 L1195.6 751" stroke="#fff" stroke-width="1.2"/>
<path d="M1325 740 H1341 V753.4 H1331.4 L1328.6 757 V753.4 H1325 Z" fill="#fff"/><path d="M1328 743.6 H1338 M1328 746.6 H1338 M1328 749.6 H1334" stroke="#1e1817" stroke-width="1.1"/>
<circle cx="1340.7" cy="755.7" r="7.7" fill="#2b2b2b" stroke="#8f8f8f" stroke-width="1"/>
<text x="1340.8" y="759.8" text-anchor="middle" font-family="Liberation Sans, sans-serif" font-size="11.5px" fill="#fff">3</text>
<rect x="1361" y="728" width="1" height="40" fill="#8c8c8c"/>
</svg>
<div class="t" id="tsearch" style="left:88.3px;top:740.6px;font-size:16px;color:#333;transform-origin:0 0;transform:scaleX(0.9182)">Taper ici pour rechercher</div>
<div class="t" id="tfra" style="left:1214.5px;top:741.6px;font-size:12px;color:#fff;transform-origin:0 0;transform:scaleX(0.8625)">FRA</div>
<div class="t" id="tclock" style="left:1264.8px;top:732.7px;font-size:12px;color:#fff;transform-origin:0 0;transform:scaleX(0.8691)">19:34</div>
<div class="t" id="tdate" style="left:1248.9px;top:750.6px;font-size:12px;color:#fff;transform-origin:0 0;transform:scaleX(0.9886)">20/11/2018</div>
<!--/TASKBAR-->
</body>
</html>
